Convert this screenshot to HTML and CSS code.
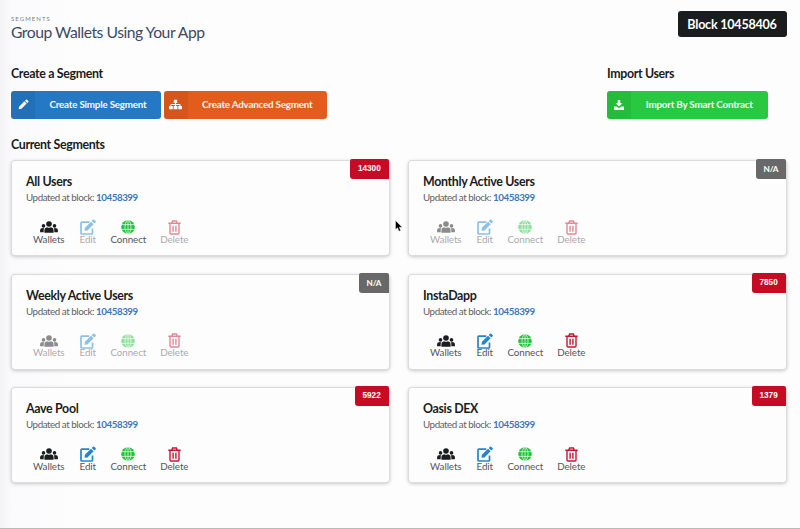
FILE: index.html
```html
<!DOCTYPE html>
<html lang="en">
<head>
<meta charset="utf-8">
<title>Segments</title>
<link rel="stylesheet" href="styles.css">
</head>
<body>
<svg class="sprite" aria-hidden="true">
  <symbol id="users" viewBox="0 0 18 12">
    <circle cx="9" cy="3" r="2.8"/><circle cx="3.5" cy="4.9" r="1.8"/><circle cx="14.5" cy="4.9" r="1.8"/>
    <path d="M4.4 11.8V9.4Q4.4 6.7 7.1 6.2Q9 7.4 10.9 6.2Q13.6 6.7 13.6 9.4V11.8ZM.1 11.3V9Q.1 7.1 2.1 6.9Q3.2 7.5 4.3 7.1Q3.7 8 3.7 9.3V11.3ZM17.9 11.3V9Q17.9 7.1 15.9 6.9Q14.8 7.5 13.7 7.1Q14.3 8 14.3 9.3V11.3Z"/>
  </symbol>
  <symbol id="edit" viewBox="0 0 16 16">
    <path d="M9.3 3.1H1.8Q1 3.1 1 3.9V14.2Q1 15 1.8 15H11.7Q12.5 15 12.5 14.2V9.4" fill="none" stroke="currentColor" stroke-width="1.7"/>
    <path d="M4.5 11.8L4.9 8.8L11 2.7L13.6 5.3L7.5 11.4ZM11.7 2L13 .7Q13.6.1 14.2.7L15.6 2.1Q16.2 2.7 15.6 3.3L14.3 4.6Z"/>
  </symbol>
  <symbol id="globe" viewBox="0 0 14 14">
    <circle cx="7" cy="7" r="6.8"/>
    <path d="M0 4.6H14M0 9.4H14M7 0V14M6 .2Q1.8 7 6 13.8M8 .2Q12.2 7 8 13.8" fill="none" stroke="#fdfdfe" stroke-width=".7"/>
  </symbol>
  <symbol id="trash" viewBox="0 0 13 15">
    <path d="M.3 3.2H12.7M3.8 3L4.6 1H8.4L9.2 3M2 3.5V13Q2 14 3 14H10Q11 14 11 13V3.5M5.1 5.7V11.7M7.9 5.7V11.7" fill="none" stroke="currentColor" stroke-width="1.4"/>
  </symbol>
</svg>
<main class="page">
  <header class="top">
    <div>
      <div class="eyebrow">SEGMENTS</div>
      <h1>Group Wallets Using Your App</h1>
    </div>
    <div class="block">Block 10458406</div>
  </header>
  <div class="tools">
    <section>
      <h2>Create a Segment</h2>
      <div class="buttons">
        <button class="btn blue"><span class="btn-icon"><svg width="11" height="11" viewBox="0 0 11 11"><path d="M.7 10.3L1.2 7.5L6.4 2.3L8.7 4.6L3.5 9.8ZM7 1.7L8 .7Q8.5.2 9 .7L10.3 2Q10.8 2.5 10.3 3L9.3 4Z"/></svg></span><span class="btn-label">Create Simple Segment</span></button>
        <button class="btn orange"><span class="btn-icon"><svg width="13" height="11" viewBox="0 0 13 11"><path d="M4.8.8H8.2V4H4.8ZM0 7H3.8V10.2H0ZM4.6 7H8.4V10.2H4.6ZM9.2 7H13V10.2H9.2Z"/><path d="M6.5 4V7M1.9 7V5.5H11.1V7" fill="none" stroke="currentColor"/></svg></span><span class="btn-label">Create Advanced Segment</span></button>
      </div>
    </section>
    <section class="import">
      <h2>Import Users</h2>
      <button class="btn green"><span class="btn-icon"><svg width="10" height="10" viewBox="0 0 10 10"><path d="M3.8 0H6.2V3.3H8.4L5 6.6L1.6 3.3H3.8ZM0 6.5H2.7L5 8.2L7.3 6.5H10V10H0Z"/></svg></span><span class="btn-label">Import By Smart Contract</span></button>
    </section>
  </div>
  <h2 class="current">Current Segments</h2>
  <div class="grid" id="grid"></div>
</main>
<svg class="cursor" width="8" height="12" viewBox="0 0 8 12"><path d="M.5.5V9.5L2.5 7.8L4 11.2L5.7 10.5L4.2 7.2H7.2Z" stroke="#fff" stroke-width=".4"/></svg>
<script src="script.js"></script>
</body>
</html>
```
FILE: styles.css
```css
* { box-sizing: border-box; }
body {
  margin: 0;
  height: 529px;
  overflow: hidden;
  position: relative;
  font-family: Lato, "Liberation Sans", sans-serif;
  color: #1b1c1d;
  background: linear-gradient(90deg, #f3f3f6 0, #fafafc 10px, #fdfdfe 70px);
  border-bottom: 1px solid #b9b9bb;
}
.sprite { position: absolute; width: 0; height: 0; }
svg { fill: currentColor; display: block; }
h1, h2, h3, p { margin: 0; }
.page { padding: 10.5px 13.5px 0 11px; }
.top { display: flex; justify-content: space-between; height: 55px; }
.eyebrow { font-size: 6px; line-height: 8px; letter-spacing: 1.05px; color: #7d7f86; margin-top: 4px; }
h1 { font-size: 15.7px; line-height: 19px; font-weight: 400; letter-spacing: -.48px; color: #3d4a60; white-space: nowrap; }
.block { width: 109px; height: 26.5px; border-radius: 3px; background: #1b1c1d; color: #fff; font-size: 12.6px; font-weight: 700; letter-spacing: -.25px; line-height: 27px; text-align: center; white-space: nowrap; }
.tools { display: flex; justify-content: space-between; height: 71px; }
.import { width: 179.5px; }
h2 { font-size: 12.4px; line-height: 16px; font-weight: 700; letter-spacing: -.35px; white-space: nowrap; }
.tools h2 { margin-bottom: 9px; }
.buttons { display: flex; gap: 2.5px; }
.btn { display: flex; height: 28px; padding: 0; border: 0; border-radius: 3px; overflow: hidden; color: #f7f9fb; font: 700 9.8px/27px Lato, sans-serif; letter-spacing: -.2px; white-space: nowrap; }
.btn-icon { width: 24px; height: 28px; display: flex; align-items: center; justify-content: center; background: rgba(0, 0, 0, .06); }
.btn-label { flex: 1; text-align: center; }
.blue { width: 150px; background: #2579c4; }
.orange { width: 163.5px; background: #e25c1c; }
.green { width: 160.5px; background: #28c840; }
.current { margin-bottom: 8.8px; }
.grid { display: grid; grid-template-columns: 377px 377px; grid-auto-rows: 94px; gap: 19.5px 20px; padding-left: .5px; }
.card { position: relative; padding: 12px 14.5px 0; background: #fdfdfe; border-radius: 3px; box-shadow: 0 0 0 1px #dcdcde, 0 1px 4px rgba(0, 0, 0, .32); }
.card h3 { font-size: 12.4px; line-height: 17px; font-weight: 700; letter-spacing: -.33px; white-space: nowrap; }
.card p { font-size: 9.8px; line-height: 15px; letter-spacing: -.46px; color: #606164; }
.card b { color: #3f76b5; }
.badge { position: absolute; right: 0; top: -2px; height: 20px; padding: 0 7.8px; border-radius: 2px 2px 0 3px; background: #c60c24; color: #fff; font: 700 8.2px/20px "Liberation Sans", sans-serif; }
.badge.na { background: #686868; font: 700 8.2px/20px Lato, sans-serif; letter-spacing: -.2px; padding: 0 7.2px; }
.actions { display: flex; gap: 15px; margin: 13.8px 0 0 7.3px; }
.action { display: flex; flex-direction: column; align-items: center; font-size: 9.8px; letter-spacing: -.08px; color: #55565a; }
.action.off { opacity: .5; }
.action .ico { height: 16px; display: flex; align-items: center; }
.action span { line-height: 12px; margin-top: -2.5px; }
.wallets { width: 31px; } .edit { width: 17px; } .connect { width: 34px; } .delete { width: 28px; }
.wallets .ico { color: #1b1c1d; } .edit .ico { color: #2185d0; } .connect .ico { color: #21c23a; } .delete .ico { color: #c5162e; }
.cursor { position: absolute; left: 395px; top: 220px; color: #000; }
```
FILE: script.js
```js
const segments = [
  ["All Users", "14300", "wallets connect"],
  ["Monthly Active Users", "N/A", ""],
  ["Weekly Active Users", "N/A", ""],
  ["InstaDapp", "7850", "wallets edit connect delete"],
  ["Aave Pool", "5922", "wallets edit connect delete"],
  ["Oasis DEX", "1379", "wallets edit connect delete"]
];
const actions = [
  ["wallets", "Wallets", "users", 18, 12],
  ["edit", "Edit", "edit", 16, 16],
  ["connect", "Connect", "globe", 14, 14],
  ["delete", "Delete", "trash", 13, 15]
];
document.getElementById("grid").innerHTML = segments.map(([name, count, enabled]) => `
  <article class="card">
    <div class="badge ${count === "N/A" ? "na" : ""}">${count}</div>
    <h3>${name}</h3>
    <p>Updated at block: <b>10458399</b></p>
    <div class="actions">${actions.map(([key, label, icon, w, h]) => `
      <div class="action ${key} ${enabled.includes(key) ? "" : "off"}">
        <div class="ico"><svg width="${w}" height="${h}"><use href="#${icon}"/></svg></div>
        <span>${label}</span>
      </div>`).join("")}
    </div>
  </article>`).join("");
```
